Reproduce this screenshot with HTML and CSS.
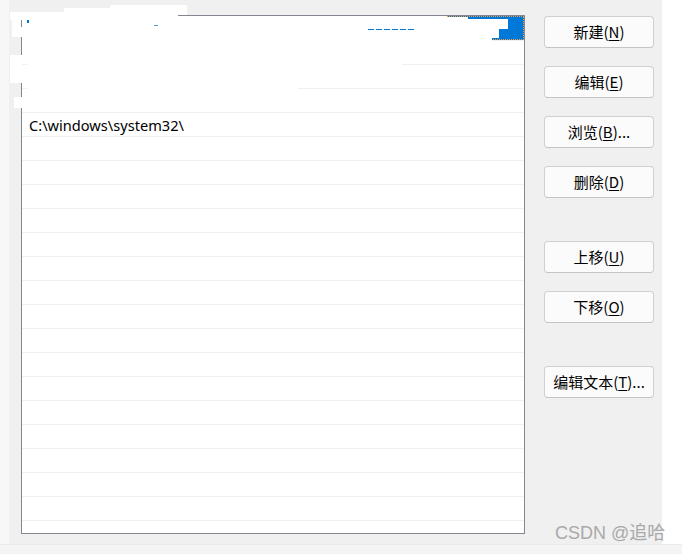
FILE: index.html
```html
<!DOCTYPE html>
<html>
<head>
<meta charset="utf-8">
<link rel="stylesheet" href="styles.css">
</head>
<body>
<div class="window">
  <div class="edge-left"></div>
  <div class="main">
    <div class="listbox">
      <div class="row selected"></div>
      <div class="row"></div>
      <div class="row"></div>
      <div class="row"></div>
      <div class="row"><span class="path">C:\windows\system32\</span></div>
      <div class="row"></div>
      <div class="row"></div>
      <div class="row"></div>
      <div class="row"></div>
      <div class="row"></div>
      <div class="row"></div>
      <div class="row"></div>
      <div class="row"></div>
      <div class="row"></div>
      <div class="row"></div>
      <div class="row"></div>
      <div class="row"></div>
      <div class="row"></div>
      <div class="row"></div>
      <div class="row"></div>
      <div class="row"></div>
      <div class="row"></div>
    </div>
    <div class="buttons">
      <button class="btn">新建(<u>N</u>)</button>
      <button class="btn">编辑(<u>E</u>)</button>
      <button class="btn">浏览(<u>B</u>)...</button>
      <button class="btn">删除(<u>D</u>)</button>
      <button class="btn spaced">上移(<u>U</u>)</button>
      <button class="btn">下移(<u>O</u>)</button>
      <button class="btn spaced">编辑文本(<u>T</u>)...</button>
    </div>
  </div>
  <div class="edge-right"></div>
</div>
<div class="bottom-band"></div>

<div class="redact r-top1"></div>
<div class="redact r-top2"></div>
<div class="redact r-top3"></div>
<div class="redact r-border"></div>
<div class="redact r-la"></div>
<div class="redact r-lb"></div>
<div class="redact r-lc"></div>
<div class="redact r-ld"></div>
<div class="redact r-le"></div>
<div class="redact r-i1"></div>
<div class="redact r-i2"></div>
<div class="redact r-i3"></div>
<div class="redact r-i4"></div>
<div class="redact r-i5"></div>
<div class="redact r-i6"></div>
<div class="redact r-i7"></div>
<div class="speck speck-a"></div>
<div class="speck speck-b"></div>
<div class="dash-line"></div>

<div class="watermark">CSDN @追哈</div>
</body>
</html>
```

FILE: styles.css
```css
html, body {
  margin: 0;
  padding: 0;
}
body {
  width: 682px;
  height: 554px;
  overflow: hidden;
  background: #f0f0f0;
  font-family: "Noto Sans", "Noto Sans CJK SC", sans-serif;
  position: relative;
}
.window {
  display: flex;
  height: 544px;
}
.edge-left {
  width: 9px;
  background: #f7f7f7;
}
.main {
  width: 653px;
  display: flex;
  padding: 15px 8px 0 12px;
  box-sizing: border-box;
  gap: 19px;
}
.edge-right {
  width: 20px;
  background: #ffffff;
}
.bottom-band {
  height: 10px;
  background: #f4f4f4;
  border-top: 1px solid #ebebeb;
}
.listbox {
  width: 504px;
  height: 519px;
  box-sizing: border-box;
  border: 1px solid #828790;
  background: #ffffff;
  overflow: hidden;
}
.row {
  height: 24px;
  box-sizing: border-box;
  border-top: 1px solid #f0f0f0;
  display: flex;
  align-items: center;
  padding-left: 7px;
}
.row.selected {
  border-top: none;
  background: #0078d7;
  outline: 1px dotted #f39a3c;
  outline-offset: -1px;
}
.path {
  font-family: "Noto Sans", sans-serif;
  font-size: 14.6px;
  color: #000;
  line-height: 20px;
  padding-top: 1px;
}
.buttons {
  width: 110px;
  display: flex;
  flex-direction: column;
  gap: 18px;
  padding-top: 1px;
}
.btn {
  width: 110px;
  height: 32px;
  margin: 0;
  padding: 0;
  box-sizing: border-box;
  border: 1px solid #d0d0d0;
  border-bottom-color: #c4c4c4;
  border-radius: 4px;
  background: #fbfbfb;
  font-family: "Noto Sans CJK SC", sans-serif;
  font-size: 15px;
  color: #000;
  line-height: 20px;
}
.btn u {
  text-underline-offset: 2px;
}
.btn.spaced {
  margin-top: 25px;
}
.redact {
  position: absolute;
  background: #ffffff;
}
.r-top1 { left: 110px; top: 5px; width: 77px; height: 10px; }
.r-top2 { left: 64px; top: 8px; width: 46px; height: 8px; }
.r-top3 { left: 10px; top: 12px; width: 54px; height: 4px; }
.r-border { left: 10px; top: 15px; width: 168px; height: 1px; }
.r-la { left: 10px; top: 12px; width: 12px; height: 8px; }
.r-lb { left: 12px; top: 20px; width: 9px; height: 7px; }
.r-lc { left: 12px; top: 27px; width: 10px; height: 10px; }
.r-ld { left: 10px; top: 55px; width: 12px; height: 28px; }
.r-le { left: 14px; top: 97px; width: 8px; height: 11px; }
.r-i1 { left: 22px; top: 16px; width: 425px; height: 1px; }
.r-i2 { left: 22px; top: 17px; width: 446px; height: 2px; }
.r-i3 { left: 22px; top: 19px; width: 486px; height: 10px; }
.r-i4 { left: 22px; top: 29px; width: 477px; height: 9px; }
.r-i5 { left: 22px; top: 38px; width: 470px; height: 3px; }
.r-i6 { left: 27px; top: 41px; width: 375px; height: 24px; }
.r-i7 { left: 27px; top: 65px; width: 271px; height: 24px; }
.speck {
  position: absolute;
  background: #0078d7;
}
.speck-a { left: 27px; top: 20px; width: 2px; height: 3px; }
.speck-b { left: 154px; top: 25px; width: 4px; height: 1px; background: #4aa0e0; }
.dash-line {
  position: absolute;
  left: 368px;
  top: 29px;
  width: 46px;
  height: 1px;
  background: repeating-linear-gradient(90deg, #0078d7 0 6px, #ffffff 6px 8px);
}
.watermark {
  position: absolute;
  left: 555px;
  top: 522px;
  font-family: "Liberation Sans", "Noto Sans CJK SC", sans-serif;
  font-size: 18px;
  line-height: 22px;
  color: #a9a9a9;
  white-space: nowrap;
}
```
